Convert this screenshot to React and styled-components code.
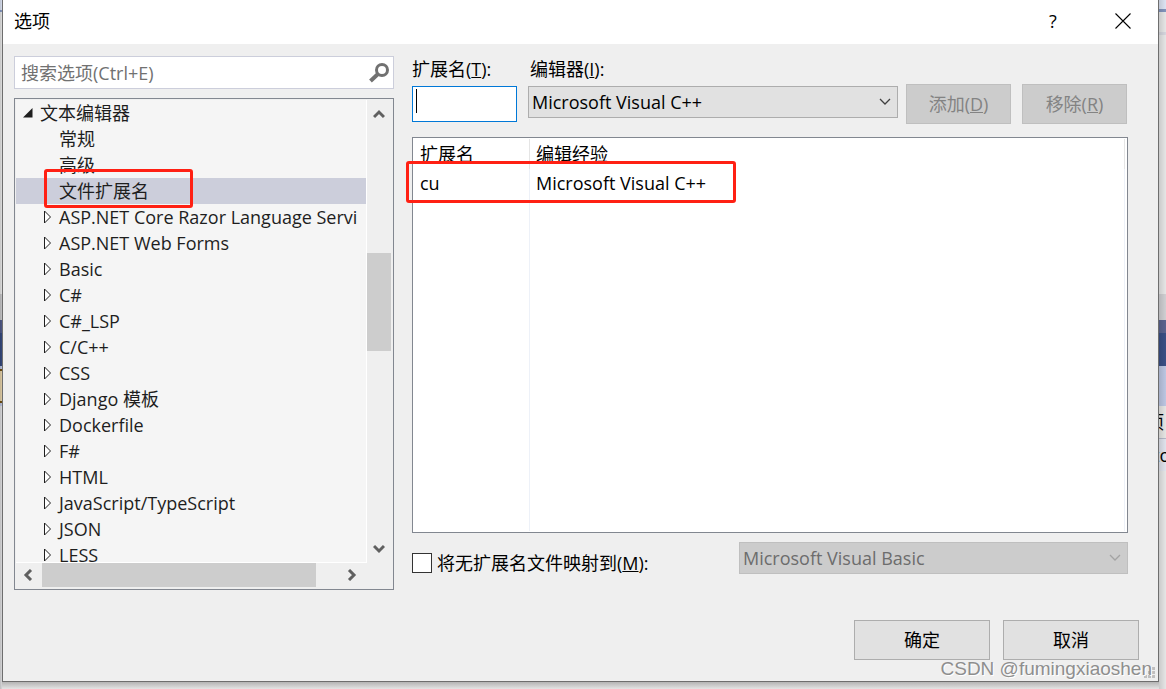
import React from "react";
import styled, { createGlobalStyle } from "styled-components";

const GlobalStyle = createGlobalStyle`
  * {
    box-sizing: border-box;
  }

  body {
    margin: 0;
    overflow: hidden;
    font-family: "Open Sans", "Noto Sans CJK SC", sans-serif;
    font-size: 18px;
    line-height: 26px;
    color: #000;
  }

  button, input, select {
    font: inherit;
    color: inherit;
    border-radius: 0;
    margin: 0;
  }
`;

const Desktop = styled.div`
  position: relative;
  display: flex;
  height: 100vh;
  min-height: 600px;
  background: #e0e0e0;
`;

const Edge = styled.div`
  flex: 0 0 ${props => props.$width}px;
  display: flex;
  flex-direction: column;
  overflow: hidden;
`;

const Stripe = styled.div`
  flex: 0 0 ${props => props.$height}px;
  background: linear-gradient(to right, rgba(0, 0, 0, 0.12), transparent) ${props => props.$color};
  text-indent: ${props => props.$indent || 0}px;
  white-space: nowrap;
  line-height: 32px;
`;

const DialogColumn = styled.div`
  flex: 1;
  min-width: 0;
  display: flex;
  flex-direction: column;
`;

const Dialog = styled.main`
  position: relative;
  flex: 1;
  min-height: 0;
  display: flex;
  flex-direction: column;
  background: #efefef;
  border: 1px solid #6e6e6e;
  border-top: none;
`;

const BottomShadow = styled.div`
  flex: 0 0 7px;
  background: linear-gradient(#b4b4b4, #e4e4e4);
`;

const TitleBar = styled.header`
  flex: 0 0 44px;
  display: flex;
  align-items: center;
  padding: 0 23px 2px 11px;
  background: #fff;
`;

const Title = styled.h1`
  flex: 1;
  margin: 0;
  font-size: 18px;
  font-weight: 400;
`;

const TitleButton = styled.button`
  display: flex;
  align-items: center;
  justify-content: center;
  width: 24px;
  height: 24px;
  margin-left: 46px;
  padding: 0;
  border: none;
  background: none;
`;

const Body = styled.div`
  flex: 1;
  min-height: 0;
  display: flex;
  gap: 18px;
  padding: 12px 30px 0 11px;
`;

const Sidebar = styled.div`
  flex: 0 0 380px;
  display: flex;
  flex-direction: column;
  gap: 9px;
`;

const SearchBox = styled.label`
  flex: 0 0 33px;
  display: flex;
  align-items: center;
  padding-right: 4px;
  background: #fff;
  border: 1px solid #cccedb;
`;

const SearchInput = styled.input`
  flex: 1;
  min-width: 0;
  padding: 0 6px;
  border: none;
  outline: none;
  background: none;

  &::placeholder {
    color: #717171;
    opacity: 1;
  }
`;

const TreeFrame = styled.div`
  flex: 1;
  min-height: 0;
  display: grid;
  grid-template-columns: minmax(0, 1fr) 24px;
  grid-template-rows: minmax(0, 1fr) 24px;
  padding: 1px 2px 2px 1px;
  border: 1px solid #828790;
`;

const TreeList = styled.ul`
  margin: 0;
  padding: 0;
  list-style: none;
  overflow: hidden;
  color: #1e1e1e;
  background: #f5f5f5;
  border-right: 1px solid #fff;
  border-bottom: 1px solid #fff;
`;

const TreeRow = styled.li`
  position: relative;
  display: flex;
  align-items: center;
  gap: 7px;
  height: 26px;
  padding-left: ${props => (props.$root ? 7 : 27)}px;
  white-space: nowrap;
  background: ${props => (props.$selected ? "#cccedb" : "transparent")};
`;

const Expander = styled.svg`
  flex: 0 0 ${props => props.width}px;
`;

const ScrollBar = styled.div`
  display: flex;
  flex-direction: ${props => (props.$vertical ? "column" : "row")};
  padding: ${props => (props.$vertical ? "2px 0" : "0 3px 0 0")};
`;

const ScrollArrow = styled.button`
  flex: 0 0 26px;
  display: flex;
  align-items: center;
  justify-content: center;
  padding: 0;
  border: none;
  background: none;
`;

const ScrollPart = styled.div`
  flex: ${props => props.$share} 0 0;
  background: ${props => (props.$thumb ? "#cdcdcd" : "transparent")};
`;

const Main = styled.section`
  flex: 1;
  min-width: 0;
  display: flex;
  flex-direction: column;
  padding-bottom: 16px;
`;

const Fields = styled.div`
  display: flex;
  align-items: flex-start;
  padding-right: 1px;
  margin-bottom: 13px;
`;

const Field = styled.div`
  flex: ${props => (props.$grow ? "1 1 0" : "0 0 105px")};
  min-width: 0;
  display: flex;
  flex-direction: column;
  gap: 4px;
  margin-right: ${props => (props.$grow ? 8 : 11)}px;
`;

const FieldLabel = styled.label`
  padding-left: ${props => (props.$inset ? 2 : 0)}px;
`;

const InputWrap = styled.div`
  position: relative;
  display: flex;
`;

const TextInput = styled.input`
  width: 100%;
  height: 36px;
  padding: 0 4px;
  border: 1px solid #0078d7;
  outline: none;
  background: #fff;
  caret-color: transparent;
`;

const Caret = styled.span`
  position: absolute;
  top: 3px;
  left: 4px;
  width: 1px;
  height: 24px;
  background: #000;
`;

const SelectWrap = styled.div`
  position: relative;
  flex: ${props => (props.$wide ? "0 0 389px" : "none")};
  display: flex;
`;

const Select = styled.select`
  appearance: none;
  width: 100%;
  height: 32px;
  padding: 0 30px 0 3px;
  border: 1px solid #adadad;
  background: #e1e1e1;
  color: #000;
  opacity: 1;

  &:disabled {
    border-color: #bfbfbf;
    background: #ccc;
    color: #6d6d6d;
  }
`;

const SelectArrow = styled.svg`
  position: absolute;
  top: 11px;
  right: 7px;
  pointer-events: none;
`;

const Button = styled.button`
  flex: 0 0 ${props => (props.$large ? 136 : 105)}px;
  height: 40px;
  padding: 0;
  border: 1px solid #adadad;
  background: #e1e1e1;

  &:disabled {
    border-color: #bfbfbf;
    background: #ccc;
    color: #838383;
  }
`;

const FieldButtons = styled.div`
  display: flex;
  gap: 11px;
  margin-top: 28px;
`;

const ListFrame = styled.div`
  position: relative;
  flex: 1;
  min-height: 0;
  padding: 1px;
  border: 1px solid #828790;
  background: #fff;
`;

const ListTable = styled.table`
  width: calc(100% - 1px);
  height: 100%;
  border-collapse: separate;
  border-spacing: 0;
  table-layout: fixed;

  th, td {
    padding: 0 6px;
    font-weight: 400;
    text-align: left;
    border-right: 1px solid #edf1f8;
  }

  th {
    height: 30px;
    border-color: #e5e5e5;
  }

  th:first-child {
    width: 116px;
  }

  td {
    height: 28px;
  }

  tr:last-child td {
    height: auto;
  }
`;

const MappingRow = styled.div`
  display: flex;
  align-items: flex-end;
  justify-content: space-between;
  margin-top: 9px;
`;

const CheckLabel = styled.label`
  display: flex;
  align-items: center;
  gap: 5px;
  line-height: 22px;
`;

const CheckBox = styled.input`
  appearance: none;
  width: 20px;
  height: 20px;
  border: 1px solid #333;
  background: #fff;
`;

const Footer = styled.footer`
  display: flex;
  justify-content: flex-end;
  gap: 13px;
  padding: 30px 19px 21px;
`;

const Highlight = styled.div`
  position: absolute;
  top: ${props => props.$top}px;
  left: ${props => props.$left}px;
  width: ${props => props.$width}px;
  height: ${props => props.$height}px;
  border: 3px solid #ff2013;
  border-radius: 3px;
  pointer-events: none;
  z-index: 1;
`;

const Watermark = styled.div`
  position: absolute;
  right: 6px;
  bottom: 0;
  font-family: "Liberation Sans", sans-serif;
  font-size: 19px;
  line-height: 24px;
  color: #8e8e8e;
  text-shadow: 1px 1px 0 #fff;
`;

const Grip = styled.svg`
  position: absolute;
  right: 2px;
  bottom: 2px;
`;

const tree = [
  { name: "文本编辑器", root: true },
  { name: "常规", leaf: true },
  { name: "高级", leaf: true },
  { name: "文件扩展名", leaf: true, selected: true },
  { name: "ASP.NET Core Razor Language Servi" },
  { name: "ASP.NET Web Forms" },
  { name: "Basic" },
  { name: "C#" },
  { name: "C#_LSP" },
  { name: "C/C++" },
  { name: "CSS" },
  { name: "Django 模板" },
  { name: "Dockerfile" },
  { name: "F#" },
  { name: "HTML" },
  { name: "JavaScript/TypeScript" },
  { name: "JSON" },
  { name: "LESS" }
];

// Slices of the editor window that stay visible beside the dialog
const leftStripes = [
  [10, "#d5dcec"],
  [2, "#8294bd"],
  [282, "#dedede"],
  [26, "#c0c0c2"],
  [13, "#4d5784"],
  [33, "#34477a"],
  [3, "#b4bdd8"],
  [2, "#6b4c10"],
  [30, "#dcc9a2"],
  [2, "#6b4c10"],
  [3, "#b4bdd8"],
  [283, "#d6d6d8"]
];

const rightStripes = [
  [9, "#dde4f3"],
  [3, "#8294bd"],
  [20, "#e6e6e6"],
  [3, "#d6d6de"],
  [259, "#e6e6e6"],
  [26, "#cfcfd2"],
  [13, "#5a638f"],
  [33, "#3a4f85"],
  [40, "#bcc6e2"],
  [32, "#e6e6e4", "项目", -13],
  [1, "#b4b8c8"],
  [30, "#e0e3ec", "to", -6],
  [220, "#e6e6e6"]
];

const chevrons = {
  up: "M1 8 L6 3 L11 8",
  down: "M1 4 L6 9 L11 4",
  left: "M8 1 L3 6 L8 11",
  right: "M4 1 L9 6 L4 11"
};

const Arrow = ({ direction, label }) => (
  <ScrollArrow aria-label={label}>
    <svg width="12" height="12" viewBox="0 0 12 12">
      <path d={chevrons[direction]} fill="none" stroke="#606060" strokeWidth="3" />
    </svg>
  </ScrollArrow>
);

const TreeItem = ({ item }) => (
  <TreeRow $root={item.root} $selected={item.selected}>
    {item.root ? (
      <Expander width="10" height="10" viewBox="0 0 10 10">
        <path d="M9.500 0 V9.500 H0 Z" fill="#1e1e1e" />
      </Expander>
    ) : (
      <Expander width="9" height="14" viewBox="0 0 9 14">
        {!item.leaf && <path d="M1.500 1 V13 L7.500 7 Z" fill="#fff" stroke="#1e1e1e" />}
      </Expander>
    )}
    {item.name}
    {item.selected && <Highlight $top={-9} $left={28} $width={149} $height={39} />}
  </TreeRow>
);

const DropDown = ({ id, value, disabled, label }) => (
  <SelectWrap $wide={disabled}>
    <Select id={id} disabled={disabled} aria-label={label} defaultValue={value}>
      <option>{value}</option>
    </Select>
    <SelectArrow width="12" height="10" viewBox="0 0 12 10">
      <path d="M1 2 L6 7 L11 2" fill="none" stroke={disabled ? "#a3a3a3" : "#404040"} strokeWidth="1.300" />
    </SelectArrow>
  </SelectWrap>
);

const EdgeStripes = ({ width, stripes }) => (
  <Edge $width={width} aria-hidden="true">
    {stripes.map(([height, color, text, indent], i) => (
      <Stripe key={i} $height={height} $color={color} $indent={indent}>{text}</Stripe>
    ))}
  </Edge>
);

const App = () => (
  <Desktop>
    <GlobalStyle />
    <EdgeStripes width={2} stripes={leftStripes} />
    <DialogColumn>
      <Dialog>
        <TitleBar>
          <Title>选项</Title>
          <TitleButton aria-label="帮助">?</TitleButton>
          <TitleButton aria-label="关闭">
            <svg width="16" height="16" viewBox="0 0 16 16">
              <path d="M0.500 0.500 L15.500 15.500 M15.500 0.500 L0.500 15.500" stroke="#000" strokeWidth="1.100" />
            </svg>
          </TitleButton>
        </TitleBar>

        <Body>
          <Sidebar>
            <SearchBox>
              <SearchInput placeholder="搜索选项(Ctrl+E)" aria-label="搜索选项" />
              <svg width="20" height="20" viewBox="0 0 20 20" fill="none" stroke="#717171">
                <circle cx="13" cy="7" r="5.500" strokeWidth="3" />
                <path d="M9 11 L1.500 18" strokeWidth="4" />
              </svg>
            </SearchBox>
            <TreeFrame>
              <TreeList>
                {tree.map(item => <TreeItem key={item.name} item={item} />)}
              </TreeList>
              <ScrollBar $vertical>
                <Arrow direction="up" label="向上滚动" />
                <ScrollPart $share={125} />
                <ScrollPart $share={98} $thumb />
                <ScrollPart $share={184} />
                <Arrow direction="down" label="向下滚动" />
              </ScrollBar>
              <ScrollBar>
                <Arrow direction="left" label="向左滚动" />
                <ScrollPart $share={274} $thumb />
                <ScrollPart $share={22} />
                <Arrow direction="right" label="向右滚动" />
              </ScrollBar>
            </TreeFrame>
          </Sidebar>

          <Main>
            <Fields>
              <Field>
                <FieldLabel htmlFor="extension">扩展名(<u>T</u>):</FieldLabel>
                <InputWrap>
                  <TextInput id="extension" type="text" />
                  <Caret />
                </InputWrap>
              </Field>
              <Field $grow>
                <FieldLabel htmlFor="editor" $inset>编辑器(<u>I</u>):</FieldLabel>
                <DropDown id="editor" value="Microsoft Visual C++" />
              </Field>
              <FieldButtons>
                <Button disabled>添加(<u>D</u>)</Button>
                <Button disabled>移除(<u>R</u>)</Button>
              </FieldButtons>
            </Fields>

            <ListFrame>
              <ListTable>
                <thead>
                  <tr>
                    <th>扩展名</th>
                    <th>编辑经验</th>
                  </tr>
                </thead>
                <tbody>
                  <tr>
                    <td>cu</td>
                    <td>Microsoft Visual C++</td>
                  </tr>
                  <tr>
                    <td />
                    <td />
                  </tr>
                </tbody>
              </ListTable>
              <Highlight $top={23} $left={-7} $width={330} $height={42} />
            </ListFrame>

            <MappingRow>
              <CheckLabel>
                <CheckBox type="checkbox" />
                <span>将无扩展名文件映射到(<u>M</u>):</span>
              </CheckLabel>
              <DropDown id="mapping" value="Microsoft Visual Basic" label="映射到的编辑器" disabled />
            </MappingRow>
          </Main>
        </Body>

        <Footer>
          <Button $large>确定</Button>
          <Button $large>取消</Button>
        </Footer>

        <Grip width="12" height="12" viewBox="0 0 12 12" fill="#bfbfbf">
          <path d="M8 0h3v3h-3z M4 4h3v3h-3z M8 4h3v3h-3z M0 8h3v3h-3z M4 8h3v3h-3z M8 8h3v3h-3z" />
        </Grip>
        <Watermark>CSDN @fumingxiaoshen</Watermark>
      </Dialog>
      <BottomShadow />
    </DialogColumn>
    <EdgeStripes width={7} stripes={rightStripes} />
  </Desktop>
);

export default App;
